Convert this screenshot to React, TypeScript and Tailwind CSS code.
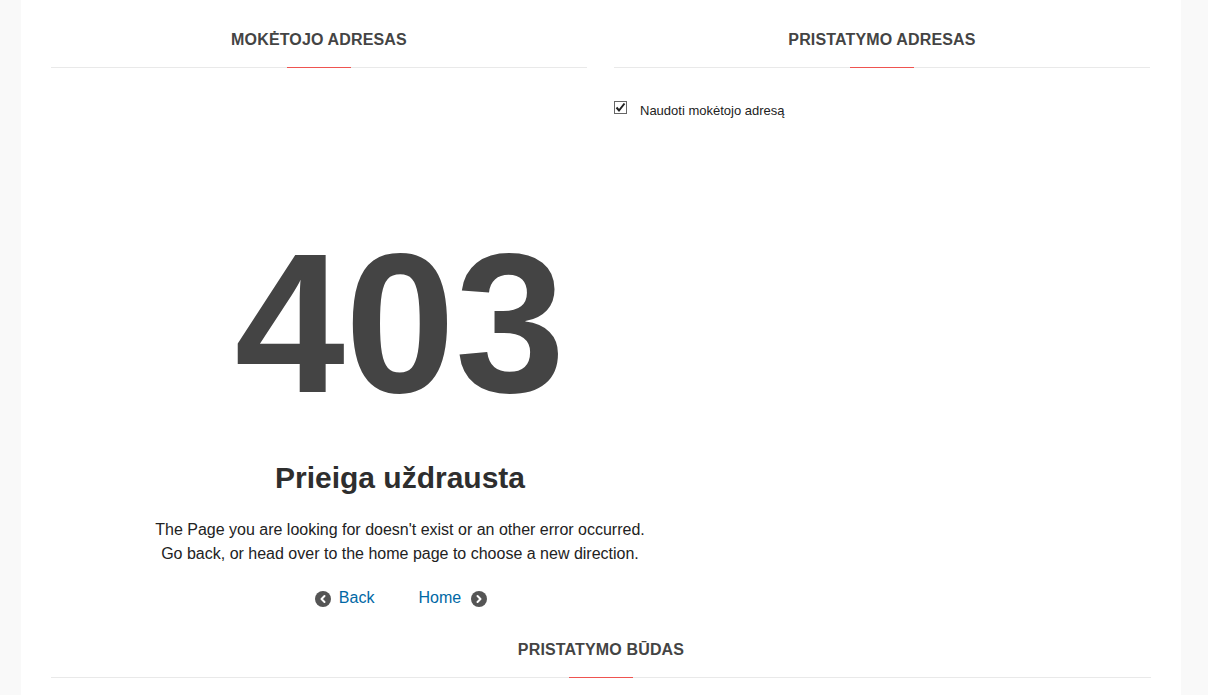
import { ChevronLeft, ChevronRight } from "lucide-react";

function SectionTitle({ title }: { title: string }) {
  return (
    <div className="relative h-[68px] border-b border-[#e9e9e9] pt-[30px] text-center">
      <h3 className="text-[16px] leading-[20px] font-bold tracking-[0.15px] text-[#444444]">
        {title}
      </h3>
      <span className="absolute left-1/2 -bottom-px h-px w-16 -translate-x-1/2 bg-[#ef5350]" />
    </div>
  );
}

function CircleIcon({ direction }: { direction: "left" | "right" }) {
  const Icon = direction === "left" ? ChevronLeft : ChevronRight;
  return (
    <span className="mt-[2px] flex h-4 w-4 items-center justify-center rounded-full bg-[#555555]">
      <Icon size={12} strokeWidth={4} className="text-white" />
    </span>
  );
}

export default function App() {
  return (
    <div className="h-[695px] overflow-hidden bg-[#f9f9f9] font-['Liberation_Sans',Arial,sans-serif]">
      <div className="ml-[21px] h-full w-[1160px] bg-white px-[30px]">
        <div className="flex gap-[27px]">
          <div className="w-[536px]">
            <SectionTitle title="MOKĖTOJO ADRESAS" />
          </div>
          <div className="w-[536px]">
            <SectionTitle title="PRISTATYMO ADRESAS" />
            <div className="mt-[33px] flex items-start text-[13px] leading-[18px] text-[#222222]">
              <span className="flex h-[13px] w-[13px] items-center justify-center border border-[#666666] bg-white">
                <svg width="11" height="11" viewBox="0 0 11 11" fill="none">
                  <path d="M1.5 5.5 L4 8.5 L9.5 1.5" stroke="#222222" strokeWidth="2" />
                </svg>
              </span>
              <span className="ml-[13px] mt-[1px]">Naudoti mokėtojo adresą</span>
            </div>
          </div>
        </div>

        <div className="ml-[49px] mt-[89px] w-[600px] text-center">
          <div className="text-[198px] leading-[230px] font-bold text-[#444444]">
            403
          </div>
          <h1 className="mt-[21px] text-[30px] leading-[36px] font-bold text-[#2e2e2e]">
            Prieiga uždrausta
          </h1>
          <p className="mt-[22px] text-[16px] leading-[24px] text-[#222222]">
            The Page you are looking for doesn't exist or an other error
            occurred.
            <br />
            Go back, or head over to the home page to choose a new direction.
          </p>
          <div className="mt-[20px] flex items-center justify-center pl-[2px] text-[16px] leading-[24px] text-[#0068a5]">
            <CircleIcon direction="left" />
            <a className="ml-[8px]">Back</a>
            <a className="ml-[44px]">Home</a>
            <span className="ml-[10px]">
              <CircleIcon direction="right" />
            </span>
          </div>
        </div>

        <SectionTitle title="PRISTATYMO BŪDAS" />
      </div>
    </div>
  );
}
